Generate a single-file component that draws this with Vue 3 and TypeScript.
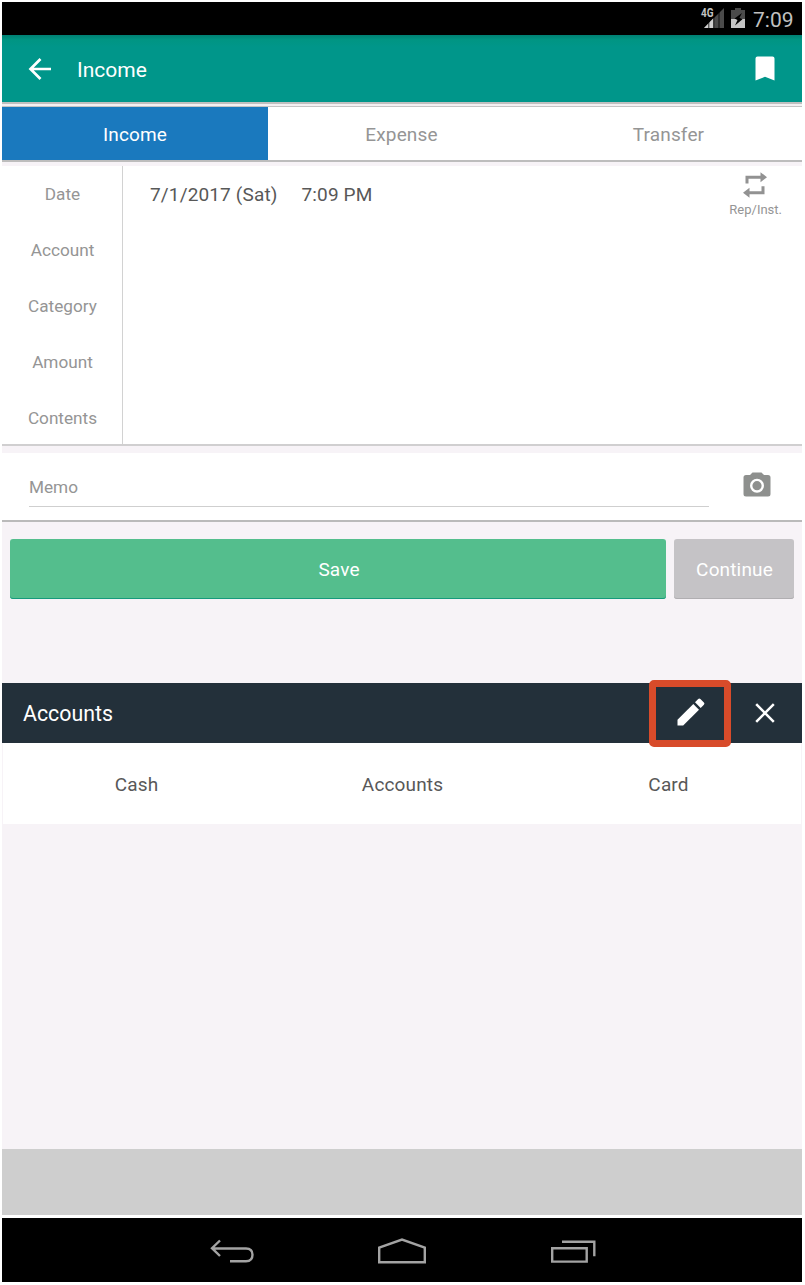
<script setup lang="ts">
import { ref } from 'vue'

type Tab = 'Income' | 'Expense' | 'Transfer'

const tabs: Tab[] = ['Income', 'Expense', 'Transfer']
const active = ref<Tab>('Income')
const fields: string[] = ['Date', 'Account', 'Category', 'Amount', 'Contents']
const accounts: string[] = ['Cash', 'Accounts', 'Card']
</script>

<template>
  <div class="screen">
    <div class="status">
      <svg class="signal" width="24" height="26" viewBox="0 -4 24 26">
        <path d="M3 22L23 2V22Z" fill="#4b4b4b" />
        <path d="M3 22L12.5 12V22Z" fill="#d0d0d0" />
        <path d="M7.8 12V22M12.8 8V22M18 4V22" stroke="#000" stroke-width="0.8" />
        <text x="0" y="11" textLength="12.5" lengthAdjust="spacingAndGlyphs" class="net">4G</text>
      </svg>
      <svg class="battery" width="14" height="21" viewBox="0 0 14 21">
        <path d="M4 0H10V2H14V11H0V2H4Z" fill="#4b4b4b" />
        <path d="M0 11H14V20H0Z" fill="#c4c4c4" />
        <path d="M11 5L3.5 10.5L6.5 12L4 17.5L11.5 11.2L8.5 9.8Z" fill="#000" />
      </svg>
      <span class="clock">7:09</span>
    </div>

    <header class="appbar">
      <svg class="back" width="24" height="24" viewBox="0 0 24 24">
        <path d="M23 12H3M12.5 2L2.5 12L12.5 22" fill="none" stroke="#fff" stroke-width="2.7" />
      </svg>
      <h1 class="title">Income</h1>
      <svg class="mark" width="20" height="25" viewBox="0 0 20 25">
        <path d="M2.5 0.5H17.5Q19.5 0.5 19.5 2.5V24.5L10 20.8L0.5 24.5V2.5Q0.5 0.5 2.5 0.5Z" fill="#fff" />
      </svg>
    </header>

    <nav class="tabs">
      <button v-for="t in tabs" :key="t" class="tab" :class="{ on: t === active }" @click="active = t">
        {{ t }}
      </button>
    </nav>

    <section class="form">
      <div class="labels">
        <div v-for="f in fields" :key="f" class="label">{{ f }}</div>
      </div>
      <div class="values">
        <div class="when">
          <span class="date">7/1/2017 (Sat)</span>
          <span class="time">7:09 PM</span>
        </div>
        <div class="repeat">
          <svg width="24" height="26" viewBox="0 0 24 26" fill="#929292">
            <path d="M2.5 11.5V3.7H17.5V0.2L24 5.2L17.5 10.2V6.7H5.5V11.5Z" />
            <path d="M21.5 14.3V22.3H6.5V25.8L0 20.8L6.5 15.8V19.3H18.5V14.3Z" />
          </svg>
          <span class="rep">Rep/Inst.</span>
        </div>
      </div>
    </section>

    <section class="memo">
      <div class="memo-input">Memo</div>
      <svg class="camera" width="28" height="25" viewBox="0 0 28 25">
        <path d="M9.5 0.5H18.5L21 3H25Q27.5 3 27.5 5.5V22Q27.5 24.5 25 24.5H3Q0.5 24.5 0.5 22V5.5Q0.5 3 3 3H7Z" fill="#8e908e" />
        <circle cx="14" cy="13.7" r="5.8" fill="none" stroke="#fff" stroke-width="2.4" />
      </svg>
    </section>

    <div class="actions">
      <button class="save">Save</button>
      <button class="continue">Continue</button>
    </div>

    <div class="panel-head">
      <span class="panel-title">Accounts</span>
      <div class="edit">
        <svg width="28" height="28" viewBox="0 0 28 28" fill="#fff">
          <path d="M0.5 21.8L16.3 6L22 11.7L6.2 27.5H0.5Z" />
          <path d="M18 4.3L21.2 1.1Q22.3 0 23.4 1.1L26.9 4.6Q28 5.7 26.9 6.8L23.7 10Z" />
        </svg>
      </div>
      <svg class="close" width="20" height="20" viewBox="0 0 20 20">
        <path d="M1.2 1.2L18.8 18.8M18.8 1.2L1.2 18.8" stroke="#fff" stroke-width="2.5" />
      </svg>
    </div>
    <div class="cells">
      <div v-for="a in accounts" :key="a" class="cell">{{ a }}</div>
    </div>

    <div class="banner"></div>
    <footer class="navbar">
      <svg width="44" height="24" viewBox="0 0 44 24">
        <path d="M2 9.5H36Q42.5 9.5 42.5 15.8T36 22.3H20M10 1.5L2 9.2L10 17" />
      </svg>
      <svg width="48" height="26" viewBox="0 0 48 26">
        <path d="M1.2 24.2V9.5L24 1.5L46.8 9.5V24.2Z" />
      </svg>
      <svg width="46" height="24" viewBox="0 0 46 24">
        <path d="M2.2 9.3H36.7V22.6H2.2ZM12 2.8H44.3V17.3" />
      </svg>
    </footer>
  </div>
</template>

<style>
body {
  background: #fff;
}
</style>

<style scoped>
.screen {
  box-sizing: border-box;
  width: 800px;
  height: 1280px;
  margin: 2px;
  display: flex;
  flex-direction: column;
  background: #f7f3f7;
  font-family: Roboto, sans-serif;
  color: #585858;
}
.screen > * {
  flex: none;
  box-sizing: border-box;
}
svg {
  display: block;
  flex: none;
}
button {
  border: 0;
  margin: 0;
  padding: 0;
  font: inherit;
}
.status {
  height: 33px;
  background: #000;
  display: flex;
  align-items: flex-start;
  padding-left: 699px;
}
.signal {
  overflow: visible;
}
.net {
  font: 700 13px Roboto, sans-serif;
  fill: #c4c4c4;
}
.battery {
  margin: 6px 0 0 6px;
}
.clock {
  margin-left: 8px;
  font-size: 21px;
  line-height: 36px;
  color: #c0c0c0;
}
.appbar {
  height: 67px;
  background: linear-gradient(#008073, #009583 5px, #00968a 12px);
  display: flex;
  align-items: center;
  padding: 0 27px 0 26px;
}
.title {
  margin: 0 auto 0 25px;
  font-size: 21px;
  font-weight: 400;
  line-height: 28px;
  padding-top: 3px;
  color: #fff;
}
.tabs {
  height: 64px;
  display: flex;
  border-top: 2px solid #bfbfbf;
  border-bottom: 4px solid #f7f3f7;
  padding-top: 2px;
  background: #f4f0f2;
}
.tab {
  flex: 1;
  border-top: 1px solid #c4c4c4;
  border-bottom: 2px solid #bdbdbd;
  background: #fff;
  color: #959595;
  font-size: 19px;
  letter-spacing: 0.15px;
  line-height: 53px;
  padding-top: 1px;
}
.tab.on {
  flex: 0 0 266px;
  background: #1a79be;
  color: #fff;
}
.form {
  height: 280px;
  display: flex;
  background: #fff;
  border-bottom: 2px solid #d0cfd0;
}
.labels {
  width: 121px;
  box-sizing: border-box;
  border-right: 1px solid #d2d2d2;
}
.label {
  height: 56px;
  line-height: 57px;
  padding-left: 1px;
  text-align: center;
  font-size: 17.2px;
  color: #959595;
}
.values {
  flex: 1;
  display: flex;
  justify-content: space-between;
  padding: 0 20px 0 27px;
}
.when {
  display: flex;
  gap: 24px;
  font-size: 19px;
  letter-spacing: 0.15px;
  line-height: 58px;
}
.repeat {
  display: flex;
  flex-direction: column;
  align-items: center;
  padding-top: 6px;
}
.repeat svg {
  margin-right: 1px;
}
.rep {
  font-size: 13px;
  line-height: 16px;
  margin-top: 4px;
  color: #959595;
}
.memo {
  height: 69px;
  margin-top: 7px;
  background: #fff;
  border-bottom: 2px solid #bababa;
  display: flex;
  align-items: flex-start;
  padding-left: 27px;
}
.memo-input {
  width: 680px;
  height: 54px;
  box-sizing: border-box;
  border-bottom: 1px solid #cfcfcf;
  font-size: 17.2px;
  line-height: 69px;
  color: #959595;
}
.camera {
  margin: 19px 0 0 34px;
}
.actions {
  display: flex;
  gap: 8px;
  height: 60px;
  margin: 17px 8px 84px;
}
.save,
.continue {
  border-radius: 3px;
  color: #fff;
  font-size: 19px;
  letter-spacing: 0.15px;
  line-height: 60px;
  padding-top: 1px;
}
.save {
  width: 656px;
  padding-left: 2px;
  background: #54be8d;
  box-shadow: inset 0 -1px #169a7c;
}
.continue {
  width: 120px;
  padding-left: 1px;
  background: #c5c3c6;
  box-shadow: inset 0 -1px #b0aeb1;
}
.panel-head {
  height: 60px;
  background: #23303a;
  display: flex;
  align-items: center;
  padding: 0 27px 0 21px;
}
.panel-title {
  flex: 1;
  font-size: 21.33px;
  line-height: 60px;
  padding-top: 2px;
  color: #fff;
}
.edit {
  position: relative;
  z-index: 1;
  box-sizing: border-box;
  width: 82px;
  height: 67px;
  border: 7px solid #d84b2a;
  border-radius: 5px;
  display: flex;
  justify-content: center;
  align-items: center;
  margin-right: 24px;
  padding: 0 0 3px 2px;
}
.cells {
  height: 81px;
  margin: 0 1px;
  display: flex;
  background: #fff;
}
.cell {
  flex: 1;
  text-align: center;
  font-size: 19px;
  letter-spacing: 0.15px;
  line-height: 83px;
  padding-left: 1px;
}
.banner {
  height: 69px;
  margin-top: auto;
  background: #cecece;
  border-bottom: 3px solid #fff;
}
.navbar {
  height: 64px;
  background: #000;
  display: flex;
  align-items: center;
  padding: 2px 206px 0 208px;
  justify-content: space-between;
}
.navbar path {
  fill: none;
  stroke: #a3a3a3;
  stroke-width: 2.4;
}
</style>
